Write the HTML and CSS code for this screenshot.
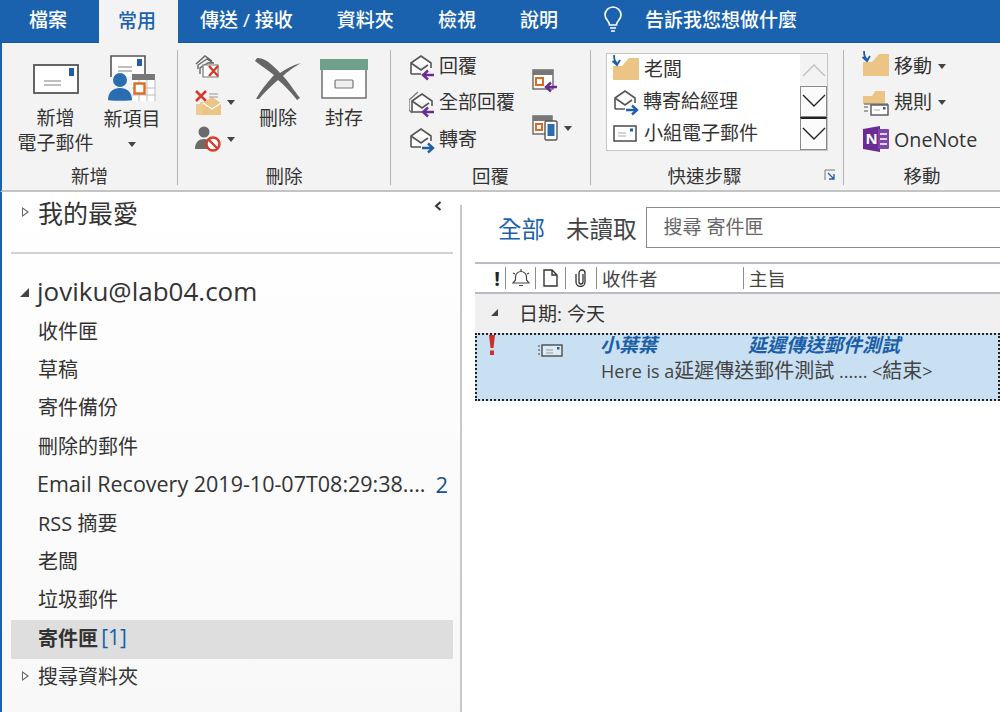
FILE: index.html
```
<!DOCTYPE html>
<html lang="zh-Hant">
<head>
<meta charset="utf-8">
<title>Outlook</title>
<link rel="stylesheet" href="styles.css">
</head>
<body>
<svg class="sprite" xmlns="http://www.w3.org/2000/svg">
  <symbol id="open-env" viewBox="0 0 24 24"><path d="M2 20V9l10-7 10 7v5M2 9l10 7 7-5M2 20h10" fill="#fff" stroke="#555" stroke-width="1.6"/></symbol>
  <symbol id="all-env" viewBox="0 0 24 24"><path d="M0 9v10l3 3M0 9l9-8" fill="none" stroke="#777" stroke-width="1.3"/><path d="M3 21V10l10-7 10 7v5M3 10l10 7 7-5M3 21h10" fill="#fff" stroke="#555" stroke-width="1.6"/></symbol>
  <symbol id="arrow-l" viewBox="0 0 14 12"><path d="M13 6H3M7 1.500 2 6l5 4.500" fill="none" stroke="#6b2c91" stroke-width="2.400"/></symbol>
  <symbol id="arrow-r" viewBox="0 0 14 12"><path d="M1 6h10M7 1.500 12 6l-5 4.500" fill="none" stroke="#1e5fa8" stroke-width="2.400"/></symbol>
  <symbol id="folder" viewBox="0 0 26 22"><path d="M0 8h9l7-8h10v22H0z" fill="#ecc586"/></symbol>
</svg>
<div class="app">
  <nav class="tabs">
    <span class="tab tab-first">檔案</span>
    <span class="tab tab-active">常用</span>
    <span class="tab">傳送 / 接收</span>
    <span class="tab">資料夾</span>
    <span class="tab">檢視</span>
    <span class="tab">說明</span>
    <span class="tell">
      <svg class="bulb" viewBox="0 0 20 26"><path d="M6.500 19c0-4-4.500-5-4.500-10a8 8 0 0 1 16 0c0 5-4.500 6-4.500 10zM7 22h6M8 25h4" fill="none" stroke="#fff" stroke-width="1.600"/></svg>
      <span>告訴我您想做什麼</span>
    </span>
  </nav>

  <section class="ribbon">
    <div class="group g-new">
      <div class="body">
        <div class="big big-new">
          <svg class="ico" width="46" height="30" viewBox="0 0 46 30"><rect x="1" y="1" width="44" height="28" fill="#fff" stroke="#555" stroke-width="1.800"/><rect x="36" y="4" width="5" height="8" fill="#1e5fa8"/><path d="M11 17h17M11 21h17" stroke="#aaa" stroke-width="1.400"/></svg>
          <span>新增<br>電子郵件</span>
        </div>
        <div class="big big-new">
          <svg class="ico" width="48" height="47" viewBox="0 0 48 47"><path d="M3 22V1h34v20" fill="#fff" stroke="#555" stroke-width="1.600"/><rect x="29" y="4" width="5" height="7" fill="#1e5fa8"/><path d="M10 12h14M10 16h14" stroke="#aaa" stroke-width="1.300"/><rect x="24" y="19" width="23" height="27" fill="#fff"/><rect x="24" y="19" width="23" height="6" fill="#777"/><path d="M31 25v21M39 25v21M24 33h23M24 40h23M47 25v21" stroke="#bbb" stroke-width="1"/><rect x="26.500" y="28.500" width="10" height="10" fill="#fff" stroke="#dd6a21" stroke-width="2.400"/><circle cx="12" cy="25" r="7" fill="#2a6eb0"/><path d="M0 45c0-8 5-12 12-12s12 4 12 12c0 1-24 1-24 0z" fill="#2a6eb0"/></svg>
          <span>新項目<br><i class="caret"></i></span>
        </div>
      </div>
      <div class="foot"><span class="label">新增</span></div>
    </div>
    <i class="sep"></i>

    <div class="group g-del">
      <div class="body">
        <div class="small-col">
          <div class="row">
            <svg class="i26" viewBox="0 0 26 26"><path d="M1 11 10 3l7 5M3 16v-4l9-6 6 4M5 21v-6l8-5h6" fill="none" stroke="#666" stroke-width="1.400"/><path d="M8 12h15v12H8z" fill="#fff" stroke="#777" stroke-width="1.200"/><path d="M14 13l9 10M23 13l-9 10" stroke="#d63b2b" stroke-width="2.400"/></svg>
          </div>
          <div class="row">
            <svg class="i26" viewBox="0 0 26 26"><path d="M1 1l10 10M11 1 1 11" stroke="#d63b2b" stroke-width="2.600"/><path d="M1 14h5v11H1zM5 12h5v13H5z" fill="#eecb93"/><path d="M8 13 17 7l9 6v12H8z" fill="#ecc586"/><path d="M8 13l9 6 9-6" fill="none" stroke="#fff" stroke-width="1.300"/><path d="M14 4h9M14 7h9" stroke="#999" stroke-width="1.200"/></svg>
            <i class="caret caret-r"></i>
          </div>
          <div class="row">
            <svg class="i26" viewBox="0 0 26 26"><circle cx="9" cy="6" r="5.500" fill="#6b6b6b"/><path d="M0 23c0-7 4-10 9-10s9 3 9 10z" fill="#6b6b6b"/><circle cx="18" cy="18" r="6.500" fill="#fff" stroke="#d63b2b" stroke-width="2.400"/><path d="M13.500 13.500l9 9" stroke="#d63b2b" stroke-width="2.400"/></svg>
            <i class="caret caret-r"></i>
          </div>
        </div>
        <div class="big big-del">
          <svg class="ico" width="46" height="42" viewBox="0 0 46 42"><path d="M2 0C8 0 13 3 18 8c2 2 5 4 7 7 6-4 13-8 21-10-7 4-14 9-18 13 5 5 10 13 17 22l-3 2C36 34 29 27 23 22 16 28 9 35 4 41H1c4-8 11-16 18-24C13 12 6 8 0 3z" fill="#666"/></svg>
          <span>刪除</span>
        </div>
        <div class="big big-arc">
          <svg class="ico" width="48" height="40" viewBox="0 0 48 40"><rect x="2" y="1" width="44" height="38" fill="#fff" stroke="#666" stroke-width="1.400"/><rect x="0" y="0" width="48" height="11" fill="#6fa08c"/><rect x="15" y="21" width="18" height="8" rx="1" fill="#eee" stroke="#777" stroke-width="1.200"/></svg>
          <span>封存</span>
        </div>
      </div>
      <div class="foot"><span class="label">刪除</span></div>
    </div>
    <i class="sep"></i>

    <div class="group g-reply">
      <div class="body">
        <div class="small-col reply-col">
          <div class="row"><span class="stack"><svg class="i24"><use href="#open-env"/></svg><svg class="arrow"><use href="#arrow-l"/></svg></span><span>回覆</span></div>
          <div class="row"><span class="stack"><svg class="i24"><use href="#all-env"/></svg><svg class="arrow"><use href="#arrow-l"/></svg></span><span>全部回覆</span></div>
          <div class="row"><span class="stack"><svg class="i24"><use href="#open-env"/></svg><svg class="arrow"><use href="#arrow-r"/></svg></span><span>轉寄</span></div>
        </div>
        <div class="meet-col">
          <div class="meet">
            <svg class="i26" viewBox="0 0 26 24"><rect x="1" y="1" width="20" height="19" fill="#fff" stroke="#666" stroke-width="1.400"/><rect x="1" y="1" width="20" height="5" fill="#777"/><rect x="4" y="9" width="7" height="7" fill="#fff" stroke="#dd6a21" stroke-width="2"/><path d="M25 18H15M19 13.500 14 18l5 4.500" fill="none" stroke="#6b2c91" stroke-width="2.400"/></svg>
          </div>
          <div class="meet">
            <svg class="i26" viewBox="0 0 26 26"><rect x="1" y="1" width="19" height="18" fill="#fff" stroke="#666" stroke-width="1.400"/><rect x="1" y="1" width="19" height="5" fill="#777"/><rect x="4" y="9" width="6" height="6" fill="#fff" stroke="#dd6a21" stroke-width="2"/><rect x="13" y="6" width="12" height="19" rx="1.500" fill="#fff" stroke="#555" stroke-width="1.400"/><rect x="15.500" y="9" width="7" height="12" fill="#2a6eb0"/></svg>
            <i class="caret caret-m"></i>
          </div>
        </div>
      </div>
      <div class="foot"><span class="label">回覆</span></div>
    </div>
    <i class="sep"></i>

    <div class="group g-quick">
      <div class="body">
        <div class="gallery">
          <div class="steps">
            <div class="step"><span class="stack"><svg class="fold"><use href="#folder"/></svg><svg class="down" viewBox="0 0 10 12"><path d="M3 0c0 5 1 7 3 8M1.500 6 6 10l3-5" fill="none" stroke="#1e5fa8" stroke-width="1.800"/></svg></span><span>老闆</span></div>
            <div class="step"><span class="stack"><svg class="i24"><use href="#open-env"/></svg><svg class="arrow"><use href="#arrow-r"/></svg></span><span>轉寄給經理</span></div>
            <div class="step"><svg class="mini" viewBox="0 0 24 18"><rect x="1" y="1" width="22" height="15" fill="#fff" stroke="#555" stroke-width="1.600"/><path d="M5 8h8M5 11h8" stroke="#aaa" stroke-width="1.200"/><rect x="17" y="3.500" width="3" height="3" fill="#1e5fa8"/></svg><span>小組電子郵件</span></div>
          </div>
          <div class="scroll">
            <span class="sbtn sbtn-up"><svg viewBox="0 0 24 14" width="24" height="14"><path d="M1 13 12 2l11 11" fill="none" stroke="#c0c0c0" stroke-width="1.400"/></svg></span>
            <span class="sbtn sbtn-on"><svg viewBox="0 0 24 14" width="24" height="14"><path d="M1 1l11 11L23 1" fill="none" stroke="#222" stroke-width="1.400"/></svg></span>
            <span class="sbtn sbtn-on sbtn-more"><svg viewBox="0 0 24 14" width="24" height="14"><path d="M1 1l11 11L23 1" fill="none" stroke="#222" stroke-width="1.400"/></svg></span>
          </div>
        </div>
      </div>
      <div class="foot foot-quick"><span class="label">快速步驟</span><svg class="launch" viewBox="0 0 12 12"><path d="M1 11V1h10" fill="none" stroke="#777"/><path d="M4 4l6 6M10 5v5H5" fill="none" stroke="#1e5fa8" stroke-width="1.300"/></svg></div>
    </div>
    <i class="sep"></i>

    <div class="group g-move">
      <div class="body">
        <div class="small-col">
          <div class="row"><span class="stack"><svg class="fold"><use href="#folder"/></svg><svg class="down" viewBox="0 0 10 12"><path d="M3 0c0 5 1 7 3 8M1.500 6 6 10l3-5" fill="none" stroke="#1e5fa8" stroke-width="1.800"/></svg></span><span>移動</span><i class="caret caret-s"></i></div>
          <div class="row"><svg class="fold" viewBox="0 0 26 26"><path d="M0 14V6h9l3-5h10v13z" fill="#ecc586"/><path d="M1 14h24M1 17h4M1 21h4" stroke="#888" stroke-width="1.300"/><rect x="8" y="15" width="17" height="10" fill="#fff" stroke="#555" stroke-width="1.400"/><path d="M11 20h6" stroke="#aaa"/><rect x="20" y="17" width="2.500" height="2.500" fill="#1e5fa8"/></svg><span>規則</span><i class="caret caret-s"></i></div>
          <div class="row"><svg class="fold" viewBox="0 0 26 26"><path d="M0 3l17-3v26L0 23z" fill="#6b2c91"/><rect x="15" y="3" width="11" height="20" rx="1" fill="#7f46a8"/><path d="M17 8h7M17 13h7M17 18h7" stroke="#fff" stroke-width="1.500"/><text class="nlet" x="2.500" y="18">N</text></svg><span class="onenote">OneNote</span></div>
        </div>
      </div>
      <div class="foot"><span class="label">移動</span></div>
    </div>
  </section>

  <main class="main">
    <aside class="nav">
      <div class="fav"><i class="tri-open"></i><span>我的最愛</span><svg class="collapse" viewBox="0 0 8 10"><path d="M6.500 1 2 5l4.500 4" fill="none" stroke="#333" stroke-width="2"/></svg></div>
      <hr class="rule">
      <div class="acct"><i class="tri-down"></i><span>joviku@lab04.com</span></div>
      <ul class="folders">
        <li>收件匣</li>
        <li>草稿</li>
        <li>寄件備份</li>
        <li>刪除的郵件</li>
        <li class="has-count"><span class="latin">Email Recovery 2019-10-07T08:29:38....</span><b class="count count-big">2</b></li>
        <li>RSS 摘要</li>
        <li>老闆</li>
        <li>垃圾郵件</li>
        <li class="sel">寄件匣 <b class="count count-sel">[1]</b></li>
        <li class="search-fold"><i class="tri-open"></i><span>搜尋資料夾</span></li>
      </ul>
    </aside>
    <i class="vline"></i>
    <div class="list">
      <div class="filter">
        <span class="f-all">全部</span>
        <span class="f-unread">未讀取</span>
        <div class="search">搜尋 寄件匣</div>
      </div>
      <div class="cols grid">
        <span class="c c-bang">!</span>
        <span class="c c-sep"><svg width="18" height="18" viewBox="0 0 18 18"><path d="M1 14h16l-2.500-3V8a5.500 5.500 0 0 0-11 0v3zM7 16.500h4M9 0v2M1 4l2 1M17 4l-2 1" fill="none" stroke="#444" stroke-width="1.200"/></svg></span>
        <span class="c c-sep"><svg width="15" height="18" viewBox="0 0 15 18"><path d="M1 1h8l5 5v11H1zM9 1v5h5" fill="none" stroke="#333" stroke-width="1.400"/></svg></span>
        <span class="c c-sep"><svg width="12" height="18" viewBox="0 0 12 18"><path d="M8 5v8a2 2 0 0 1-4 0V4a3 3 0 0 1 6 0v9a4.500 4.500 0 0 1-9 0V5" fill="none" stroke="#333" stroke-width="1.300"/></svg></span>
        <span class="c c-sep c-text">收件者</span>
        <span class="c c-sep c-text">主旨</span>
      </div>
      <div class="date"><i class="tri-down"></i><span>日期: 今天</span></div>
      <div class="mail grid">
        <span class="m-flag"><svg width="10" height="20" viewBox="0 0 10 20"><path d="M2 0h6L6.500 13h-3zM3 15.500h4V20H3z" fill="#c9302c"/></svg></span>
        <span></span>
        <span class="m-env"><svg width="25" height="13" viewBox="0 0 25 13"><path d="M0 2h2M0 6h2M0 10h2" stroke="#444"/><rect x="4" y="1" width="20" height="11" fill="#dcebf6" stroke="#333" stroke-width="1.200"/><path d="M8 6h7M8 9h7" stroke="#999"/><rect x="19" y="3" width="2.500" height="2.500" fill="#1e5fa8"/></svg></span>
        <span></span>
        <span class="m-from">小葉葉</span>
        <span class="m-subj">延遲傳送郵件測試</span>
        <span class="m-prev"><span class="m-lat">Here is a</span>延遲傳送郵件測試<span class="m-lat"> ...... &lt;</span>結束<span class="m-lat">&gt;</span></span>
      </div>
    </div>
  </main>
</div>
</body>
</html>
```

FILE: styles.css
```
* { box-sizing: border-box; }
html, body { margin: 0; padding: 0; }
body {
  width: 1000px;
  height: 712px;
  overflow: hidden;
  background: #fff;
  color: #333;
  font-family: "Open Sans", "Noto Sans CJK TC", sans-serif;
  font-size: 18px;
}
i { font-style: normal; display: block; }
.sprite { display: none; }
.app { display: flex; flex-direction: column; height: 712px; overflow: hidden; }

/* title tabs */
.tabs {
  display: flex;
  align-items: stretch;
  height: 43px;
  flex: none;
  background: #1a62ae;
  border-bottom: 1px solid #15589f;
  color: #fff;
  font-size: 19px;
  font-weight: 500;
}
.tab { display: flex; align-items: center; padding: 0 22px 4px; white-space: nowrap; }
.tab-first { padding: 0 32px 4px 29px; }
.tab-active {
  width: 79px;
  padding: 0 3px 4px 0;
  justify-content: center;
  height: 43px;
  background: #f3f3f3;
  color: #1a62ae;
}
.tell { display: flex; align-items: center; gap: 22px; margin-left: 23px; padding-bottom: 4px; font-size: 19px; }
.bulb { width: 20px; height: 26px; }

/* ribbon */
.ribbon {
  display: flex;
  flex: none;
  height: 149px;
  background: #f3f3f3;
  border-left: 2px solid #1a62ae;
  border-bottom: 2px solid #c4c4c4;
  font-size: 19px;
  line-height: 25px;
}
.sep { width: 1px; flex: none; margin: 7px 0 5px; background: #b4b4b4; }
.group { display: flex; flex-direction: column; flex: none; padding-top: 5px; }
.g-new { width: 175px; padding-left: 15px; }
.g-del { width: 212px; padding-left: 17px; }
.g-reply { width: 199px; padding-left: 18px; }
.g-quick { width: 252px; padding-left: 15px; }
.g-move { flex: 1; padding-left: 19px; }
.body { display: flex; flex: 1; min-height: 0; }
.foot { display: flex; flex: none; height: 26px; align-items: center; justify-content: center; font-size: 18.500px; margin-bottom: 2px; }
.g-new .foot { margin-left: -15px; }
.g-del .foot { margin-left: -17px; }
.g-reply .foot { margin-left: -18px; }
.g-move .foot { margin-left: -19px; }
.foot-quick { margin-left: -15px; }
.foot-quick .label { flex: 1; text-align: center; padding-right: 6px; }
.launch { width: 12px; height: 12px; margin: 0 7px 0 0; }

.big { display: flex; flex-direction: column; align-items: center; padding-top: 9px; text-align: center; white-space: nowrap; }
.ico { display: block; height: auto; flex: none; }
.big-new { width: 77px; }
.big-new:first-child .ico { margin-top: 7px; margin-bottom: 12px; }
.big-new:last-child { padding-top: 7px; width: 76px; }
.big-new:last-child .ico { margin-bottom: 5px; }
.big-del { width: 46px; }
.big-del .ico { margin-top: 1px; margin-bottom: 6px; }
.big-arc { width: 48px; margin-left: 19px; }
.big-arc .ico { margin-top: 2px; margin-bottom: 7px; }

.caret { width: 0; height: 0; border: 4px solid transparent; border-top: 5px solid #444; border-bottom: 0; }
.big .caret { margin: 10px auto 0; }
.caret-r { margin-left: 6px; }
.caret-m { margin-left: 6px; }
.caret-s { margin-left: 6px; }

.small-col { display: flex; flex-direction: column; flex: none; }
.row { display: flex; align-items: center; height: 36.500px; white-space: nowrap; }
.g-del .small-col { width: 60px; }
.reply-col { width: 123px; }
.i26 { width: 26px; height: 26px; display: block; flex: none; }
.i24 { width: 24px; height: 24px; display: block; }
.stack { position: relative; display: block; width: 24px; height: 24px; flex: none; margin-right: 6px; }
.arrow { position: absolute; right: -2px; bottom: -3px; width: 14px; height: 12px; }
.fold { display: block; width: 26px; height: 22px; flex: none; margin-right: 5px; }
.g-move .row > svg.fold { height: 26px; }
.g-move .stack { width: 26px; margin-right: 5px; }
.down { position: absolute; left: -2px; top: -3px; width: 10px; height: 12px; }
.meet-col { display: flex; flex-direction: column; }
.meet { display: flex; align-items: center; height: 26px; margin-top: 20px; }
.meet + .meet { margin-top: 21px; }

/* quick steps */
.gallery { display: flex; width: 222px; height: 98px; margin-top: 5px; background: #fff; border: 1px solid #c6c6c6; }
.steps { flex: 1; display: flex; flex-direction: column; margin-top: -1px; }
.step { display: flex; align-items: center; height: 32.500px; padding-left: 6px; white-space: nowrap; }
.step .fold { height: 22px; }
.step .stack { margin-right: 6px; }
.step:first-child .stack { width: 26px; height: 22px; margin-right: 5px; }
.mini { width: 24px; height: 18px; flex: none; margin-right: 7px; }
.scroll { display: flex; flex-direction: column; width: 27px; flex: none; background: #f3f3f3; }
.sbtn { display: flex; align-items: center; justify-content: center; height: 32px; }
.sbtn-on { border: 1px solid #8a8a8a; background: #fbfbfb; }
.sbtn-more { border-top: 2px solid #222; height: 33px; }

/* nav pane */
.main { display: flex; flex: 1; min-height: 0; }
.nav {
  width: 460px;
  flex: none;
  padding: 0 7px 0 9px;
  border-left: 2px solid #1a62ae;
  background: linear-gradient(#fff, #f8f8f8);
  white-space: nowrap;
}
.vline { width: 2px; flex: none; margin-top: 13px; background: #c8c8c8; }
.fav { display: flex; align-items: center; height: 44px; padding: 0 0 5px 11px; font-size: 25px; }
.tri-open { width: 0; height: 0; flex: none; border-left: 7px solid #666; border-top: 5px solid transparent; border-bottom: 5px solid transparent; margin-right: 9px; position: relative; }
.tri-open::after { content: ""; position: absolute; left: -6px; top: -3px; border-left: 4.500px solid #fff; border-top: 3px solid transparent; border-bottom: 3px solid transparent; }
.collapse { width: 8px; height: 10px; margin-left: auto; margin-right: 11px; margin-bottom: 11px; }
.rule { height: 2px; margin: 16px 0 0; border: 0; background: #d2d2d2; }
.acct { display: flex; align-items: center; height: 40px; margin-top: 17px; padding-left: 9px; font-size: 26px; }
.tri-down { width: 0; height: 0; flex: none; border-bottom: 9px solid #444; border-left: 9px solid transparent; margin-right: 8px; margin-top: 3px; }
.folders { list-style: none; margin: 0; padding: 0; font-size: 20px; }
.folders li { display: flex; align-items: center; height: 38.400px; padding-left: 27px; white-space: pre; }
.latin { font-size: 21.500px; margin-left: -1px; }
.has-count { justify-content: space-between; padding-right: 5px; }
.count { font-weight: 400; color: #1a5ea8; }
.count-big { font-size: 22px; color: #1a4f93; }
.count-sel { font-size: 21px; margin-left: -2px; }
.folders .sel { background: #dedede; font-weight: 700; margin: 2px 0 -2px; padding-bottom: 4px; }
.folders .search-fold { padding-left: 11px; }

/* message list */
.list { flex: 1; min-width: 0; padding: 15px 0 0 13px; }
.filter { display: flex; align-items: center; height: 41px; font-size: 23.500px; margin-right: -6px; }
.f-all { margin-left: 23px; color: #1a62ae; }
.f-unread { margin-left: 21px; color: #444; }
.search { flex: 1; height: 41px; margin-left: 9px; padding-left: 17px; line-height: 39px; font-size: 19px; color: #666; border: 1px solid #8a8a8a; background: #fff; }
.grid { display: grid; grid-template-columns: 30px 30px 30px 31px 147px 1fr; }
.cols { height: 32px; margin-top: 14px; border-top: 2px solid #b7bdc3; border-bottom: 2px solid #b7bdc3; align-items: center; }
.c { display: flex; align-items: center; height: 22px; }
.c-bang { justify-content: flex-end; padding-right: 5px; font-weight: 700; font-size: 20px; color: #222; }
.c-sep { justify-content: center; border-left: 1px solid #8c8c8c; }
.c-text { justify-content: flex-start; padding-left: 5px; color: #444; font-size: 18.500px; }
.date { display: flex; align-items: center; height: 39px; padding: 0 0 2px 16px; background: #f0f0f0; color: #333; font-size: 19px; }
.date .tri-down { border-bottom-width: 7px; border-left-width: 7px; margin: 0 21px 0 0; }
.mail {
  height: 68px;
  background: #c9e0f2;
  border: 2px dotted #222;
  grid-template-columns: 28px 30px 30px 31px 147px 1fr;
  grid-template-rows: 21px 27px;
  white-space: nowrap;
}
.m-flag { padding-left: 10px; height: 20px; }
.m-env { padding-top: 3px; margin-left: 3px; }
.m-from, .m-subj { font-style: italic; font-weight: 700; color: #1b5ea8; line-height: 21px; font-size: 19px; }
.m-from { padding-left: 4px; }
.m-subj { padding-left: 5px; }
.m-prev { grid-column: 5 / 7; padding-left: 5px; color: #444; line-height: 29px; font-size: 20px; }
.m-lat { font-size: 18px; }
.onenote { font-size: 19.700px; }
.nlet { font-size: 15px; font-weight: 700; fill: #fff; font-family: "Open Sans", sans-serif; }
```
